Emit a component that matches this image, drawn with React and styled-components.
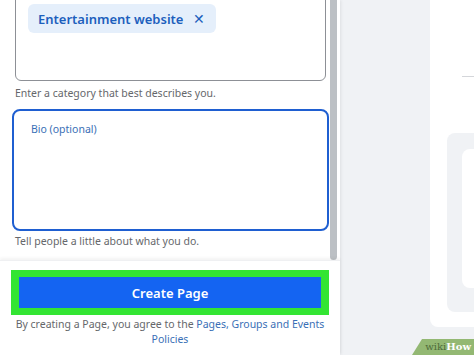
import styled, { createGlobalStyle } from "styled-components";

const GlobalStyle = createGlobalStyle`
  html, body {
    margin: 0;
    padding: 0;
    background: #f0f2f5;
  }
  body {
    font-family: "Noto Sans", "Open Sans", sans-serif;
    overflow: hidden;
  }
`;

const Page = styled.div`
  display: flex;
  width: 474px;
  height: 355px;
  position: relative;
  overflow: hidden;
  background: #f0f2f5;
`;

const Sidebar = styled.aside`
  width: 340px;
  height: 355px;
  display: flex;
  flex-direction: column;
  background: #fff;
  box-shadow: 1px 0 3px rgba(0, 0, 0, 0.08);
  z-index: 1;
`;

const ScrollArea = styled.div`
  height: 260px;
  display: flex;
  overflow: hidden;
`;

const Form = styled.div`
  width: 330px;
  display: flex;
  flex-direction: column;
`;

const Scrollbar = styled.div`
  width: 10px;
  display: flex;
  justify-content: flex-start;
`;

const Thumb = styled.div`
  width: 7px;
  height: 260px;
  background: #bcc0c4;
  border-radius: 0 0 4px 4px;
`;

const CategoryBox = styled.div`
  margin: -20px 4px 0 15px;
  height: 101px;
  box-sizing: border-box;
  border: 1px solid #8d9096;
  border-radius: 6px;
  padding: 23px 12px;
`;

const Chip = styled.div`
  display: inline-flex;
  align-items: center;
  gap: 10px;
  height: 29px;
  padding: 0 11px 0 10px;
  border-radius: 6px;
  background: #e5effb;
  color: #1d5fbd;
  font-size: 13px;
  font-weight: 600;
`;

const ChipClose = styled.span`
  font-size: 14px;
  font-weight: 400;
  line-height: 1;
`;

const Hint = styled.div`
  margin: ${({ $top }) => $top || 5}px 0 0 15px;
  font-size: 10.5px;
  color: #65676b;
  line-height: 14px;
`;

const BioBox = styled.div`
  margin: 9px 1px 0 12px;
  height: 122px;
  box-sizing: border-box;
  border: 2px solid #1f5fd1;
  border-radius: 8px;
  padding: 11px 17px;
`;

const BioLabel = styled.div`
  font-size: 10.5px;
  color: #3a6fb6;
`;

const Footer = styled.div`
  flex: 1;
  display: flex;
  flex-direction: column;
  align-items: center;
  padding-top: 9px;
  box-shadow: 0 -2px 3px rgba(0, 0, 0, 0.05);
  border-top: 1px solid #eff0f2;
`;

const Highlight = styled.div`
  width: 318px;
  height: 45px;
  box-sizing: border-box;
  padding: 7px 8px;
  background: #33e533;
`;

const CreateButton = styled.button`
  width: 100%;
  height: 100%;
  border: none;
  background: #1464f2;
  color: #fff;
  font-family: inherit;
  font-size: 13px;
  font-weight: 600;
`;

const Terms = styled.p`
  margin: 2px 0 0;
  width: 330px;
  text-align: center;
  font-size: 10.5px;
  line-height: 15px;
  color: #65676b;
`;

const TermsLink = styled.span`
  color: #3a6fb6;
`;

const Middle = styled.div`
  width: 90px;
  background: #f0f2f5;
`;

const PreviewCard = styled.div`
  flex: 1;
  height: 327px;
  background: #fff;
  border-radius: 0 0 0 8px;
  display: flex;
  flex-direction: column;
  padding-left: 17px;
`;

const CoverLine = styled.div`
  margin: 76px 0 0 15px;
  height: 1px;
  background: #d4d6da;
`;

const PreviewPanel = styled.div`
  margin-top: 56px;
  height: 179px;
  background: #f0f2f5;
  border-radius: 8px 0 0 8px;
  padding: 16px 0 0 15px;
  box-sizing: border-box;
`;

const PreviewInner = styled.div`
  height: 139px;
  background: #fff;
  border-radius: 8px 0 0 8px;
`;

const Watermark = styled.div`
  position: absolute;
  right: 0;
  bottom: 0;
  width: 62px;
  height: 16px;
  background: #93b873;
  clip-path: polygon(10px 0, 100% 0, 100% 100%, 0 100%);
  color: #fff;
  font-family: "DejaVu Serif", serif;
  font-size: 10px;
  font-weight: bold;
  line-height: 16px;
  text-align: right;
  padding-right: 3px;
  box-sizing: border-box;
`;

const WikiPart = styled.span`
  color: #4e6b3a;
  font-weight: normal;
`;

export default function App() {
  return (
    <Page>
      <GlobalStyle />
      <Sidebar>
        <ScrollArea>
          <Form>
            <CategoryBox>
              <Chip>
                Entertainment website
                <ChipClose>✕</ChipClose>
              </Chip>
            </CategoryBox>
            <Hint>Enter a category that best describes you.</Hint>
            <BioBox>
              <BioLabel>Bio (optional)</BioLabel>
            </BioBox>
            <Hint $top={3}>Tell people a little about what you do.</Hint>
          </Form>
          <Scrollbar>
            <Thumb />
          </Scrollbar>
        </ScrollArea>
        <Footer>
          <Highlight>
            <CreateButton>Create Page</CreateButton>
          </Highlight>
          <Terms>
            By creating a Page, you agree to the{" "}
            <TermsLink>Pages, Groups and Events Policies</TermsLink>
          </Terms>
        </Footer>
      </Sidebar>
      <Middle />
      <PreviewCard>
        <CoverLine />
        <PreviewPanel>
          <PreviewInner />
        </PreviewPanel>
      </PreviewCard>
      <Watermark>
        <WikiPart>wiki</WikiPart>How
      </Watermark>
    </Page>
  );
}
